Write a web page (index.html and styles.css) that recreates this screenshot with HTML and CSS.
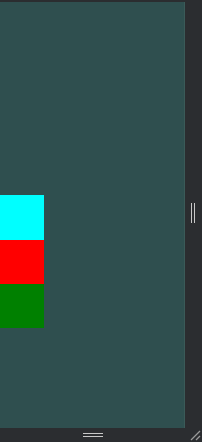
FILE: index.html
```html
<!DOCTYPE html>
<html lang="en">
<head>
  <meta charset="UTF-8" />
  <meta name="viewport" content="width=device-width, initial-scale=1.0" />
  <title>Split view</title>
  <link rel="stylesheet" href="styles.css">
</head>
<body>
  <div class="frame">
    <div class="pane">
      <div class="swatch cyan"></div>
      <div class="swatch red"></div>
      <div class="swatch green"></div>
    </div>
    <div class="gutter-v">
      <span class="grip-v"></span>
    </div>
    <div class="gutter-h">
      <span class="grip-h"></span>
    </div>
    <div class="corner">
      <svg width="14" height="14" viewBox="0 0 14 14">
        <line x1="3" y1="12" x2="12" y2="3" stroke="#9a9a9a" stroke-width="1.3" />
        <line x1="8" y1="12" x2="12" y2="8" stroke="#9a9a9a" stroke-width="1.3" />
      </svg>
    </div>
  </div>
</body>
</html>
```

FILE: styles.css
```css
html, body {
  margin: 0;
  padding: 0;
  background: #2b2d30;
  width: 202px;
  height: 442px;
  overflow: hidden;
}

.frame {
  display: grid;
  grid-template-columns: 185px 17px;
  grid-template-rows: 426px 14px;
  padding-top: 2px;
  height: 440px;
}

.pane {
  background: #2f4f4f;
  box-shadow: inset -1px 0 0 #3b5a58;
  padding-top: 193px;
  display: flex;
  flex-direction: column;
}

.swatch {
  width: 44px;
  height: 44px;
}

.cyan {
  background: #00ffff;
  height: 45px;
}

.red {
  background: #ff0000;
}

.green {
  background: #008000;
}

.gutter-v {
  display: flex;
  align-items: center;
  justify-content: center;
  background: #2b2d30;
}

.grip-v {
  width: 2px;
  height: 20px;
  border-left: 1px solid #c8c8c8;
  border-right: 1px solid #c8c8c8;
  margin-top: -4px;
  margin-left: -2px;
}

.gutter-h {
  display: flex;
  justify-content: center;
  align-items: center;
  background: #2b2d30;
  padding-right: 0;
}

.grip-h {
  width: 20px;
  height: 2px;
  border-top: 1px solid #c8c8c8;
  border-bottom: 1px solid #c8c8c8;
  margin-left: 0;
}

.corner {
  display: flex;
  align-items: flex-end;
  justify-content: flex-end;
  background: #2b2d30;
}

.corner svg {
  display: block;
}
```
